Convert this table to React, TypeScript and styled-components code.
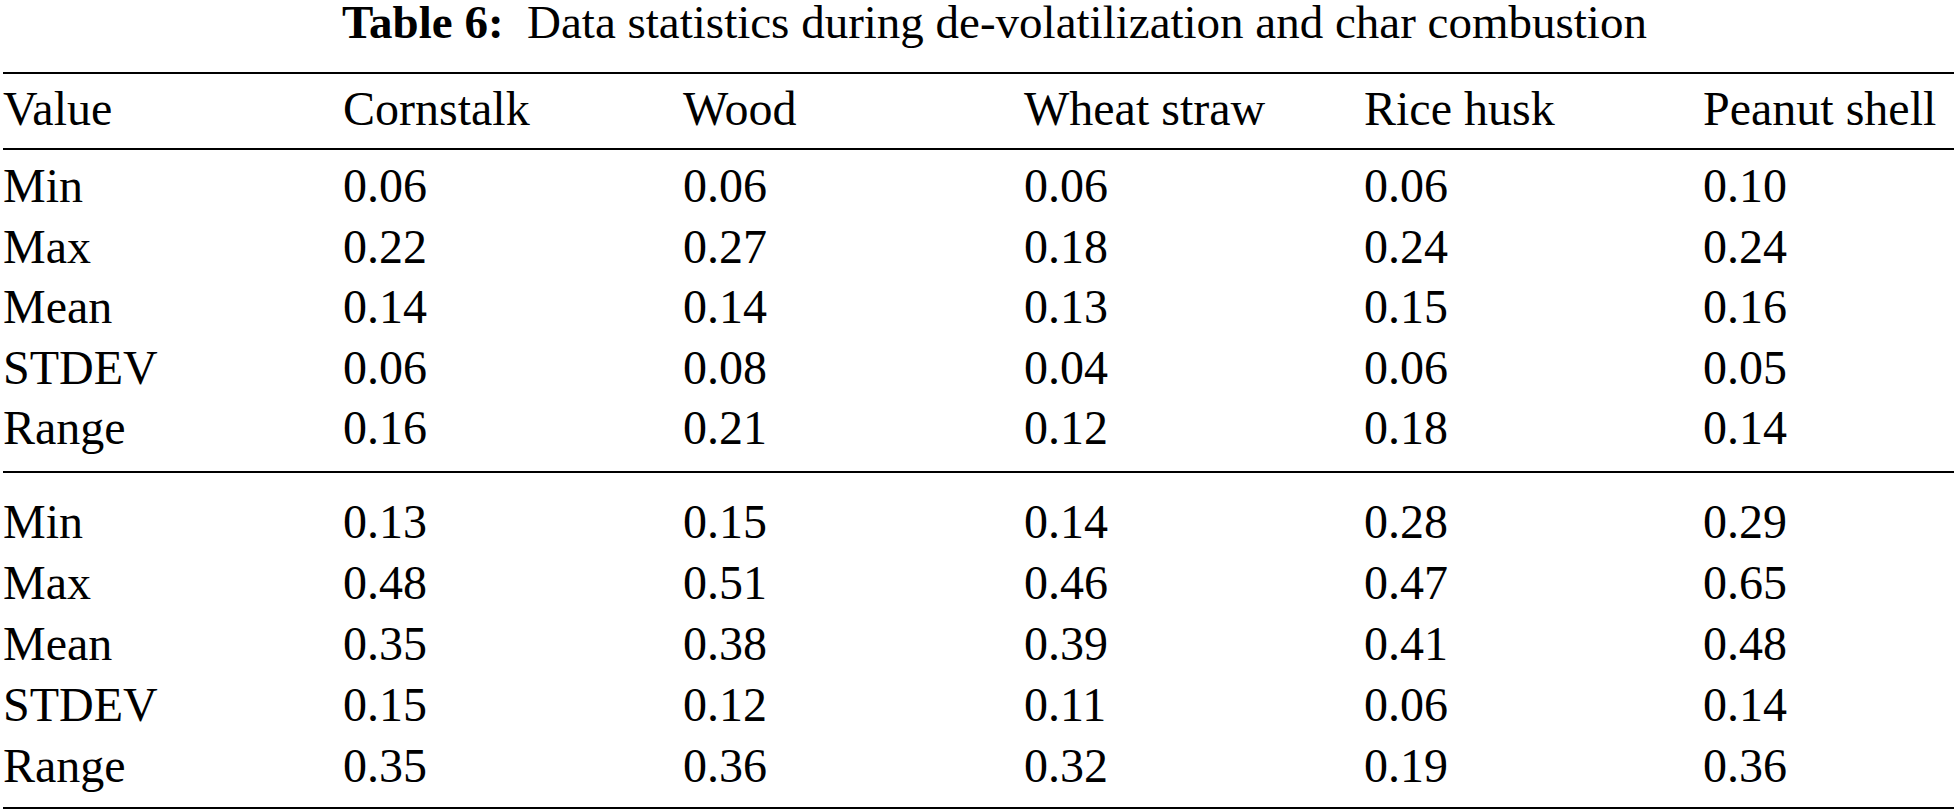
import styled, { createGlobalStyle } from 'styled-components'

const GlobalStyle = createGlobalStyle`
  html, body {
    margin: 0;
    padding: 0;
    background: #ffffff;
  }
  body {
    font-family: 'Liberation Serif', 'Times New Roman', serif;
    color: #000000;
  }
`

const Page = styled.div`
  padding-left: 3px;
  width: 1951px;
`

const Caption = styled.div`
  font-size: 47px;
  line-height: 44px;
  height: 44px;
  padding-left: 32px;
  text-align: center;
  margin-bottom: 28px;
  white-space: pre;
`

const CaptionLabel = styled.b`
  font-weight: 700;
`

const Table = styled.div`
  border-top: 2px solid #000;
  border-bottom: 2px solid #000;
`

const Head = styled.div`
  padding: 4px 0 9px;
  border-bottom: 2px solid #000;
`

const Group = styled.div<{ $top: number; $bottom: number; $divider?: boolean }>`
  padding: ${(p) => p.$top}px 0 ${(p) => p.$bottom}px;
  border-bottom: ${(p) => (p.$divider ? '2px solid #000' : 'none')};
`

const Row = styled.div<{ $height: number }>`
  display: grid;
  grid-template-columns: 340px 340px 341px 340px 339px 1fr;
  font-size: 48px;
  line-height: ${(p) => p.$height}px;
  white-space: nowrap;
`

const Cell = styled.span``

const columns = ['Value', 'Cornstalk', 'Wood', 'Wheat straw', 'Rice husk', 'Peanut shell']

const devolatilization = [
  ['Min', '0.06', '0.06', '0.06', '0.06', '0.10'],
  ['Max', '0.22', '0.27', '0.18', '0.24', '0.24'],
  ['Mean', '0.14', '0.14', '0.13', '0.15', '0.16'],
  ['STDEV', '0.06', '0.08', '0.04', '0.06', '0.05'],
  ['Range', '0.16', '0.21', '0.12', '0.18', '0.14'],
]

const charCombustion = [
  ['Min', '0.13', '0.15', '0.14', '0.28', '0.29'],
  ['Max', '0.48', '0.51', '0.46', '0.47', '0.65'],
  ['Mean', '0.35', '0.38', '0.39', '0.41', '0.48'],
  ['STDEV', '0.15', '0.12', '0.11', '0.06', '0.14'],
  ['Range', '0.35', '0.36', '0.32', '0.19', '0.36'],
]

function App() {
  return (
    <Page>
      <GlobalStyle />
      <Caption>
        <CaptionLabel>Table 6:</CaptionLabel>
        {'  Data statistics during de-volatilization and char combustion'}
      </Caption>

      <Table>
        <Head>
          <Row $height={61}>
            {columns.map((c) => (
              <Cell key={c}>{c}</Cell>
            ))}
          </Row>
        </Head>

        {/* de-volatilization */}
        <Group $top={6} $bottom={12.5} $divider>
          {devolatilization.map((row) => (
            <Row key={row[0]} $height={60.5}>
              {row.map((v, i) => (
                <Cell key={i}>{v}</Cell>
              ))}
            </Row>
          ))}
        </Group>

        {/* char combustion */}
        <Group $top={18} $bottom={11}>
          {charCombustion.map((row) => (
            <Row key={row[0]} $height={61}>
              {row.map((v, i) => (
                <Cell key={i}>{v}</Cell>
              ))}
            </Row>
          ))}
        </Group>
      </Table>
    </Page>
  )
}

export default App
